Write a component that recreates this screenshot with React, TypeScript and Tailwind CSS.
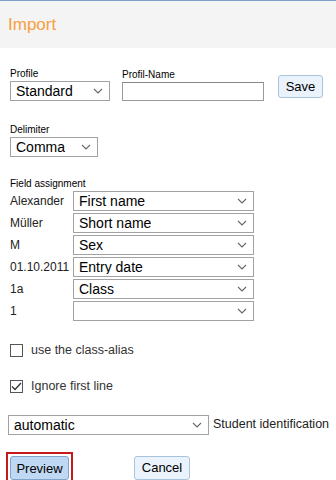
import React from "react";

const Chevron = () => (
  <svg width="10" height="6" viewBox="0 0 10 6" className="shrink-0">
    <path d="M1 1 L5 5 L9 1" fill="none" stroke="#666" strokeWidth="1.1" />
  </svg>
);

type FakeSelectProps = {
  value: string;
  className?: string;
};

const FakeSelect = ({ value, className = "" }: FakeSelectProps) => (
  <div
    className={
      "flex shrink-0 items-center justify-between border border-[#a2a2a2] bg-white pl-[5px] pr-[6px] h-[20px] text-[14px] leading-none text-black " +
      className
    }
  >
    <span className="truncate">{value}</span>
    <Chevron />
  </div>
);

const rows = [
  { sample: "Alexander", field: "First name" },
  { sample: "Müller", field: "Short name" },
  { sample: "M", field: "Sex" },
  { sample: "01.10.2011", field: "Entry date" },
  { sample: "1a", field: "Class" },
  { sample: "1", field: "" },
];

export default function App() {
  return (
    <div className="w-[336px] h-[480px] overflow-hidden bg-white font-['Liberation_Sans',Arial,sans-serif] text-black">
      {/* Header */}
      <div className="border-t-[1.5px] border-[#7d9fc6] bg-[#f4f4f4] h-[48px] flex items-center pl-[8px]">
        <span className="text-[17px] text-[#f7a041] leading-none">Import</span>
      </div>

      <div className="px-[10px]">
        {/* Profile row */}
        <div className="flex items-end mt-[20px]">
          <div className="flex flex-col">
            <span className="text-[10px] leading-[12px] mb-[1px]">Profile</span>
            <FakeSelect value="Standard" className="w-[100px]" />
          </div>
          <div className="flex flex-col ml-[12px]">
            <span className="text-[10px] leading-[12px] mb-[1px]">Profil-Name</span>
            <div className="w-[142px] h-[19px] border border-[#9a9a9a] border-t-[#888] bg-white" />
          </div>
          <button className="ml-[14px] mb-[2px] self-start mt-[7px] w-[45px] h-[23px] rounded-[3px] border border-[#a9c3dc] bg-[#eaf2fb] text-[13px] leading-none">
            Save
          </button>
        </div>

        {/* Delimiter */}
        <div className="flex flex-col mt-[23px]">
          <span className="text-[10px] leading-[12px] mb-[1px]">Delimiter</span>
          <FakeSelect value="Comma" className="w-[88px]" />
        </div>

        {/* Field assignment */}
        <div className="mt-[21px]">
          <span className="text-[10px] leading-[12px] block mb-[1px]">Field assignment</span>
          <div className="flex flex-col gap-[2px]">
            {rows.map((r) => (
              <div key={r.sample} className="flex items-center">
                <span className="w-[63px] whitespace-nowrap text-[12px] text-[#222]">{r.sample}</span>
                <FakeSelect value={r.field} className="w-[181px]" />
              </div>
            ))}
          </div>
        </div>

        {/* Checkboxes */}
        <label className="flex items-center mt-[20px]">
          <span className="w-[13px] h-[13px] border border-[#555] bg-white" />
          <span className="ml-[8px] text-[12.5px] text-[#333]">use the class-alias</span>
        </label>
        <label className="flex items-center mt-[17px]">
          <span className="w-[13px] h-[13px] border border-[#555] bg-white flex items-center justify-center">
            <svg width="11" height="9" viewBox="0 0 11 9">
              <path d="M1 4.5 L4 7.5 L10 1" fill="none" stroke="#333" strokeWidth="1.3" />
            </svg>
          </span>
          <span className="ml-[8px] text-[12.5px] text-[#333]">Ignore first line</span>
        </label>
      </div>

      {/* Student identification */}
      <div className="flex items-center px-[8px] mt-[19px]">
        <FakeSelect value="automatic" className="w-[201px]" />
        <span className="ml-[4px] whitespace-nowrap text-[12.5px] text-[#222]">Student identification</span>
      </div>

      {/* Buttons */}
      <div className="flex items-center mt-[17px] pl-[6px]">
        <div className="border-2 border-[#c41a1a] p-[2px]">
          <button className="w-[59px] h-[24px] rounded-[3px] border border-[#7fa5cd] bg-[#bfd8f3] text-[13px] leading-none">
            Preview
          </button>
        </div>
        <button className="ml-[61px] w-[56px] h-[24px] rounded-[3px] border border-[#a9c3dc] bg-[#eaf2fb] text-[13px] leading-none">
          Cancel
        </button>
      </div>
    </div>
  );
}
